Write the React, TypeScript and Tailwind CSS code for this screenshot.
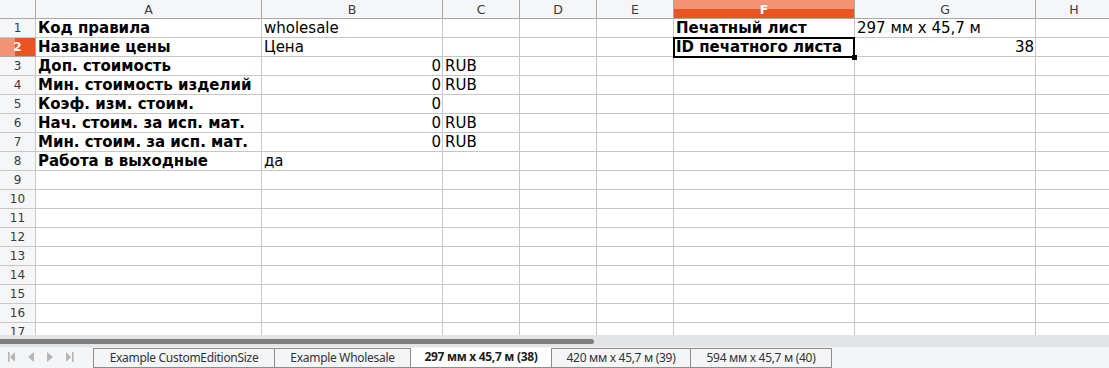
import React from "react";

type Cell = { t: string; b?: boolean; r?: boolean };

const COLS = [
  { k: "A", w: 226 },
  { k: "B", w: 181 },
  { k: "C", w: 77 },
  { k: "D", w: 77 },
  { k: "E", w: 77 },
  { k: "F", w: 181 },
  { k: "G", w: 181 },
  { k: "H", w: 77 },
];

const DATA: Record<number, Record<string, Cell>> = {
  1: {
    A: { t: "Код правила", b: true },
    B: { t: "wholesale" },
    F: { t: "Печатный лист", b: true },
    G: { t: "297 мм x 45,7 м" },
  },
  2: {
    A: { t: "Название цены", b: true },
    B: { t: "Цена" },
    F: { t: "ID печатного листа", b: true },
    G: { t: "38", r: true },
  },
  3: { A: { t: "Доп. стоимость", b: true }, B: { t: "0", r: true }, C: { t: "RUB" } },
  4: { A: { t: "Мин. стоимость изделий", b: true }, B: { t: "0", r: true }, C: { t: "RUB" } },
  5: { A: { t: "Коэф. изм. стоим.", b: true }, B: { t: "0", r: true } },
  6: { A: { t: "Нач. стоим. за исп. мат.", b: true }, B: { t: "0", r: true }, C: { t: "RUB" } },
  7: { A: { t: "Мин. стоим. за исп. мат.", b: true }, B: { t: "0", r: true }, C: { t: "RUB" } },
  8: { A: { t: "Работа в выходные", b: true }, B: { t: "да" } },
};

const ROWS = Array.from({ length: 17 }, (_, i) => i + 1);

function NavIcons() {
  return (
    <div className="w-[93px] h-[21px] relative">
      <svg width="93" height="21" viewBox="0 0 93 21" className="absolute left-0 top-0">
        <g fill="#b5b5b5">
          <rect x="8" y="5" width="1.6" height="10" />
          <polygon points="15,5 15,15 10,10" />
          <polygon points="34,5 34,15 28,10" />
          <polygon points="47,5 47,15 53,10" />
          <polygon points="66,5 66,15 71,10" />
          <rect x="72" y="5" width="1.6" height="10" />
        </g>
      </svg>
    </div>
  );
}

export default function App() {
  const font = { fontFamily: '"DejaVu Sans", sans-serif' };
  return (
    <div className="w-[1109px] h-[368px] overflow-hidden bg-white flex flex-col">
      <div className="h-[335px] overflow-hidden relative" style={font}>
        {/* header row */}
        <div className="flex h-[19px]">
          <div className="w-[36px] shrink-0 h-[19px] bg-[#f5f6f7] border-r border-b border-[#a8a8a8]" />
          {COLS.map((c) => (
            <div
              key={c.k}
              style={{ width: c.w }}
              className={
                c.k === "F"
                  ? "shrink-0 h-[19px] border-r border-b border-[#a8a8a8] bg-[linear-gradient(to_bottom,#f39373_0%,#f39373_50%,#e95420_50%,#e95420_100%)] text-white font-bold text-[12.5px] leading-[19px] text-center"
                  : "shrink-0 h-[19px] border-r border-b border-[#a8a8a8] bg-[#f5f6f7] text-[#3a3a3a] text-[12.5px] leading-[19px] text-center"
              }
            >
              {c.k}
            </div>
          ))}
        </div>
        {ROWS.map((r) => (
          <div key={r} className="flex h-[19px]">
            <div
              className={
                r === 2
                  ? "w-[36px] shrink-0 h-[19px] border-r border-b border-[#a8a8a8] bg-[linear-gradient(to_right,#f39373_0%,#f39373_43%,#e95420_43%,#e95420_100%)] text-white font-bold text-[12px] leading-[19px] text-center"
                  : "w-[36px] shrink-0 h-[19px] border-r border-b border-[#c8c8c8] bg-[#f5f6f7] text-[#3a3a3a] text-[12px] leading-[19px] text-center"
              }
            >
              {r}
            </div>
            {COLS.map((c) => {
              const cell = DATA[r]?.[c.k];
              return (
                <div
                  key={c.k}
                  style={{ width: c.w }}
                  className={
                    "shrink-0 h-[19px] border-r border-b border-[#c6c6c6] text-black text-[15px] leading-[18px] whitespace-nowrap overflow-visible px-[2px] " +
                    (cell?.r ? "text-right pr-[1px]" : "text-left") +
                    (cell?.b ? " font-bold" : "")
                  }
                >
                  {cell?.t ?? ""}
                </div>
              );
            })}
          </div>
        ))}
        {/* selection outline for F2 */}
        <div className="absolute left-[673px] top-[37px] w-[182px] h-[21px] border-2 border-black pointer-events-none" />
        <div className="absolute left-[852px] top-[55px] w-[5px] h-[5px] bg-black" />
      </div>
      {/* horizontal scrollbar */}
      <div className="h-[12px] bg-[#e3e4e5] pt-[4px] shrink-0">
        <div className="h-[5px] w-[594px] bg-[#7f7f7f] rounded-r-[3px]" />
      </div>
      {/* sheet tabs */}
      <div
        className="h-[21px] bg-[#f4f5f6] flex items-start shrink-0"
        style={{ fontFamily: '"Noto Sans", "Open Sans", sans-serif' }}
      >
        <NavIcons />
        <div className="flex pt-[1px]">
          <div className="w-[182px] h-[20px] border border-[#8c8c8c] bg-[#f4f5f6] text-[#333] text-[12px] leading-[18px] text-center tracking-[-0.3px]">
            Example CustomEditionSize
          </div>
          <div className="w-[136px] h-[20px] border border-l-0 border-[#8c8c8c] bg-[#f4f5f6] text-[#333] text-[12px] leading-[18px] text-center tracking-[-0.3px]">
            Example Wholesale
          </div>
          <div className="w-[140px] h-[20px] border-b border-[#8c8c8c] bg-white text-[#222] font-bold text-[12px] leading-[18px] text-center tracking-[-0.3px]">
            297 мм x 45,7 м (38)
          </div>
          <div className="w-[140px] h-[20px] border border-[#8c8c8c] bg-[#f4f5f6] text-[#333] text-[12px] leading-[18px] text-center tracking-[-0.3px]">
            420 мм x 45,7 м (39)
          </div>
          <div className="w-[141px] h-[20px] border border-l-0 border-[#8c8c8c] bg-[#f4f5f6] text-[#333] text-[12px] leading-[18px] text-center tracking-[-0.3px]">
            594 мм x 45,7 м (40)
          </div>
        </div>
      </div>
    </div>
  );
}
